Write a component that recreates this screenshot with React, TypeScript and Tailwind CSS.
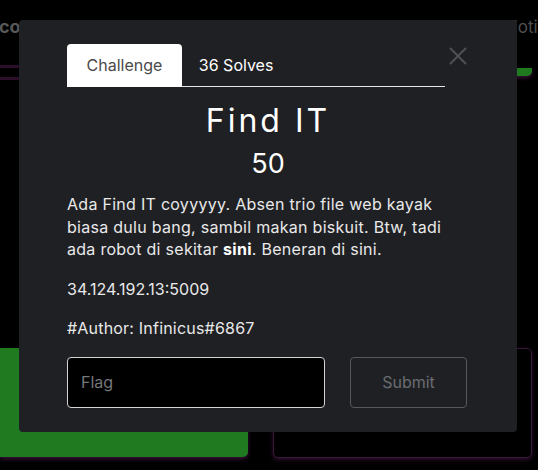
export default function App() {
  return (
    <div
      className="relative w-[538px] h-[470px] overflow-hidden bg-black"
      style={{ fontFamily: "Inter, 'Open Sans', sans-serif" }}
    >
      {/* page behind the modal */}
      <div className="flex h-[50px] items-center">
        <span className="-ml-[1px] mt-[2px] text-[18px] font-bold text-[#575757]">cor</span>
        <span className="ml-auto mt-[6px] w-[33px] whitespace-nowrap text-[17px] text-[#4f4f4f]">Notifications</span>
      </div>
      <div className="grid grid-cols-[248px_259px] gap-x-[25px]">
        <div>
          <div className="h-[18px] border-b-[3px] border-[#2a0e2a]" />
          <div className="mt-[9px] h-[3px] bg-[#2a0e2a]" />
        </div>
        <div className="mt-[18px] h-[8px] rounded-br-[5px] bg-[#1f7a20] shadow-[0_2px_4px_#3a123a]" />
      </div>
      <div className="mt-[268px] grid grid-cols-[248px_259px] gap-x-[25px]">
        <div className="h-[109px] rounded-br-[5px] bg-[#1f7a20] shadow-[0_2px_4px_#3a123a]" />
        <div className="h-[110px] rounded-[5px] border border-[#3a183a] bg-black shadow-[0_2px_4px_#2e0e2e]" />
      </div>

      {/* modal */}
      <div className="absolute left-[19px] top-[20px] w-[498px] h-[412px] rounded-[4px] bg-[#1f2024] px-[48px] pt-[24px]">
        <div className="flex items-start">
          <div className="flex w-[378px] border-b border-[#e5e5e5]">
            <div className="-mb-px rounded-t-[4px] bg-white px-[19.5px] py-[9px] text-[16px] text-[#4a4a4a]">
              Challenge
            </div>
            <div className="px-[17px] py-[9px] text-[16px] text-white">36 Solves</div>
          </div>
          <button className="ml-auto mr-[2px] mt-[3px] text-[#505156]">
            <svg width="18" height="18" viewBox="0 0 18 18" stroke="currentColor" strokeWidth="2">
              <path d="M1 1L17 17M17 1L1 17" />
            </svg>
          </button>
        </div>

        <h2 className="mt-[14px] text-center text-[32px] leading-[40px] tracking-[3px] text-white">Find IT</h2>
        <h3 className="mt-[5px] text-center text-[27px] leading-[36px] text-white">50</h3>

        <p className="mt-[11px] w-[396px] text-[16px] leading-[22.5px] tracking-[0.28px] text-[#e9e9e9]">
          Ada Find IT coyyyyy. Absen trio file web kayak biasa dulu bang, sambil makan biskuit. Btw, tadi ada
          robot di sekitar <b className="text-white">sini</b>. Beneran di sini.
        </p>
        <p className="mt-[17px] text-[16px] leading-[22.5px] text-[#e9e9e9]">34.124.192.13:5009</p>
        <p className="mt-[17px] text-[16px] leading-[22.5px] tracking-[0.2px] text-[#e9e9e9]">#Author: Infinicus#6867</p>

        <div className="mt-[17px] flex items-center">
          <input
            placeholder="Flag"
            className="h-[51px] w-[258px] rounded-[4px] border border-[#d4d4d4] bg-black px-[13px] text-[16px] text-white placeholder-[#75777b] outline-none"
          />
          <button className="ml-[25px] h-[51px] w-[117px] rounded-[4px] border border-[#55585d] text-[16px] text-[#6a6c71]">
            Submit
          </button>
        </div>
      </div>
    </div>
  );
}
